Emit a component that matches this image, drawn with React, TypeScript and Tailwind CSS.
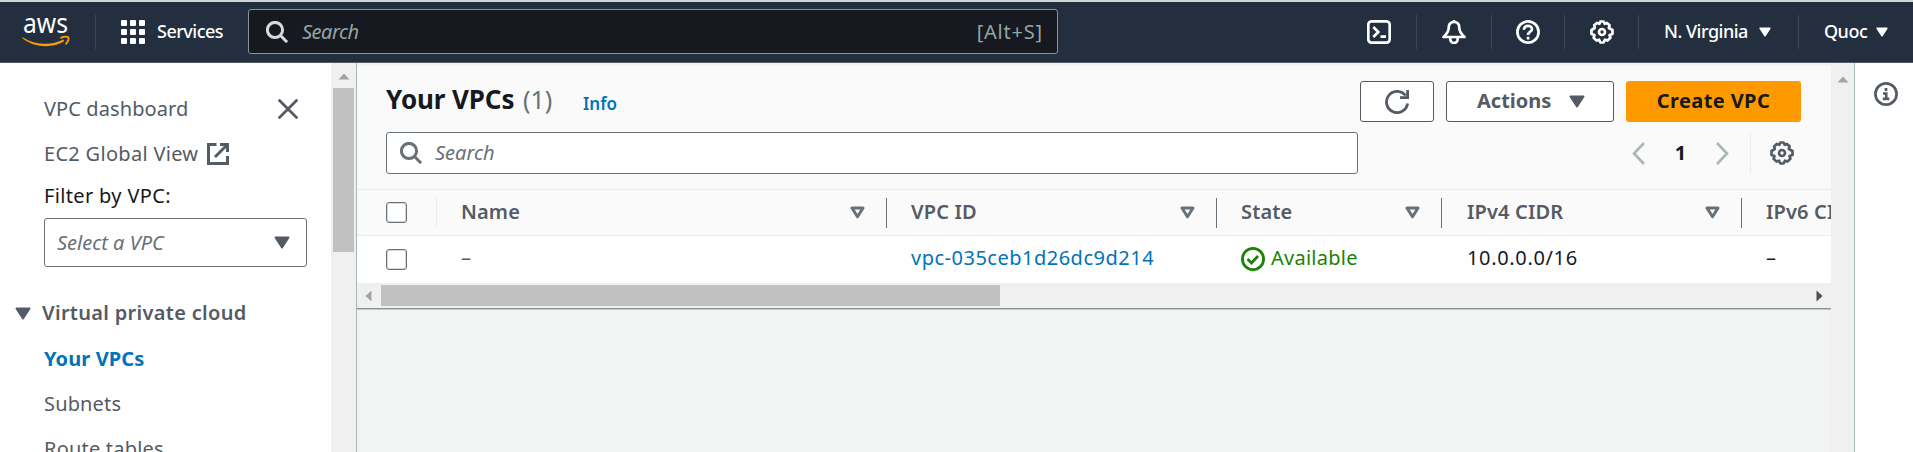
import React from "react";

const Caret = ({ className = "" }: { className?: string }) => (
  <svg viewBox="0 0 16 13" className={`shrink-0 ${className}`} fill="currentColor" stroke="currentColor" strokeWidth="2" strokeLinejoin="round">
    <path d="M1.5 1.5h13L8 11.5z" />
  </svg>
);

const SortIcon = () => (
  <svg viewBox="0 0 15 13" className="h-[13px] w-[15px] shrink-0 text-[#687078]" fill="none" stroke="currentColor" strokeWidth="3" strokeLinejoin="round">
    <path d="M2 2h11L7.5 10.8z" />
  </svg>
);

const SearchIcon = ({ className = "" }: { className?: string }) => (
  <svg viewBox="0 0 22 22" className={`size-[22px] shrink-0 ${className}`} fill="none" stroke="currentColor" strokeWidth="3">
    <circle cx="9" cy="9" r="7.6" />
    <path d="M14.5 14.5l6.6 6.6" />
  </svg>
);

const GearIcon = ({ className = "" }: { className?: string }) => (
  <svg viewBox="0 0 24 24" className={`size-6 shrink-0 ${className}`} fill="none" stroke="currentColor" strokeWidth="2.7" strokeLinejoin="round">
    <path d="M10.400 1.500h3.200l1 2.300 2.300-.9 2.700 2.400-.8 2.700 3.700 2v4l-3 1 .9 2.700-3 2.900-2.500-.9-1.300 2.800h-3.200l-1.300-2.800-2.500.9-3-2.900.9-2.700-3-1v-4l3.300-2-.6-2.700 2.900-2.400 2.300.9z" />
    <circle cx="12" cy="12" r="3" />
  </svg>
);

const ScrollArrow = ({ d, className = "" }: { d: string; className?: string }) => (
  <svg viewBox="0 0 12 12" className={`size-3 shrink-0 ${className}`} fill="currentColor">
    <path d={d} />
  </svg>
);

const NavDivider = () => <div className="h-[34px] w-px shrink-0 bg-[#414750]" />;

const AwsLogo = () => (
  <svg viewBox="0 0 48 36" className="h-9 w-12 shrink-0">
    <text x="1" y="19" fill="#fff" textLength="45" lengthAdjust="spacingAndGlyphs" className="font-['Noto_Sans'] text-[27px]">aws</text>
    <path d="M0.500 23.300c13 8.300 29 8.300 41 2.200l.8 1.800C31 34.500 12 34 0 24z" fill="#f90" />
    <path d="M38.500 24c4-1.600 7-1.600 7.800-.6s-.3 4.500-2.800 7" fill="none" stroke="#f90" strokeWidth="1.900" />
  </svg>
);

const Header = () => (
  <header className="flex h-[61px] shrink-0 items-center border-b border-[#545b64] bg-[#232f3e] pb-px text-white">
    <div className="ml-[22px] flex w-[73px] items-center pt-px"><AwsLogo /></div>
    <NavDivider />
    <svg viewBox="0 0 24 24" className="ml-[25px] size-6" fill="currentColor">
      {[0, 9, 18].map((y) => [0, 9, 18].map((x) => <rect key={`${x}-${y}`} x={x} y={y} width="6" height="6" rx="1" />))}
    </svg>
    <span className="ml-3 w-[91px] text-[18px] font-medium tracking-[-0.5px]">Services</span>
    <div className="flex h-[45px] w-[810px] items-center rounded-[3px] border border-[#879596] bg-[#16191f] pl-[17px] pr-[14px]">
      <SearchIcon className="text-[#d5dbdb]" />
      <span className="ml-[14px] text-[20px] italic tracking-[-0.5px] text-[#95a5a6]">Search</span>
      <span className="ml-auto text-[20px] tracking-[0.8px] text-[#95a5a6]">[Alt+S]</span>
    </div>
    <svg viewBox="0 0 24 24" className="ml-[309px] size-6" fill="none" stroke="currentColor" strokeWidth="2.700">
      <rect x="1.300" y="1.300" width="21.400" height="21.400" rx="3.500" />
      <path d="M6.300 7l5 5-5 5M13.500 16.700h5.500" />
    </svg>
    <div className="ml-[25px] mr-[25px]"><NavDivider /></div>
    <svg viewBox="0 0 24 24" className="size-6" fill="none" stroke="currentColor" strokeWidth="2.700" strokeLinejoin="round">
      <path d="M12 2c-4.500 0-5.300 3.500-5.300 6 0 4-3 7-5.200 9h21c-2.200-2-5.200-5-5.200-9 0-2.500-.8-6-5.300-6z" />
      <path d="M12 0v2M8.300 17.500v1.800a3.700 3.700 0 0 0 7.400 0v-1.800" />
    </svg>
    <div className="ml-[25px] mr-6"><NavDivider /></div>
    <svg viewBox="0 0 24 24" className="size-6" fill="none" stroke="currentColor" strokeWidth="2.700">
      <circle cx="12" cy="12" r="10.600" />
      <path d="M8 9.800c0-5.300 8-4.800 8-.8 0 2.800-3.900 2.600-3.900 6M12.100 16.800v2.600" />
    </svg>
    <div className="mx-6"><NavDivider /></div>
    <GearIcon className="ml-px" />
    <div className="ml-6 mr-[25px]"><NavDivider /></div>
    <span className="w-[94px] text-[18px] font-medium tracking-[-0.5px]">N. Virginia</span>
    <Caret className="ml-px h-[10px] w-3" />
    <div className="ml-[27px] mr-[25px]"><NavDivider /></div>
    <span className="w-[52px] text-[18px] font-medium tracking-[-0.5px]">Quoc</span>
    <Caret className="h-[10px] w-3" />
  </header>
);

const Sidebar = () => (
  <nav className="flex w-[357px] shrink-0 border-r border-[#aab7b8] bg-white text-[20px] leading-[28px] text-[#545b64]">
    <div className="flex h-full w-[331px] flex-col overflow-hidden whitespace-nowrap pl-[44px] pr-[24px]">
      <div className="mt-[32px] flex items-center justify-between pr-[9px]">
        <span className="tracking-[0.1px]">VPC dashboard</span>
        <svg viewBox="0 0 20 20" className="size-5" fill="none" stroke="currentColor" strokeWidth="2.800" strokeLinecap="round"><path d="M1.500 1.500l17 17M18.500 1.500l-17 17" /></svg>
      </div>
      <div className="mt-[17px] flex items-center">
        <span className="w-[163px] tracking-[0.3px]">EC2 Global View</span>
        <svg viewBox="0 0 22 22" className="size-[22px]" fill="none" stroke="currentColor" strokeWidth="3"><path d="M9.500 1.500h-8v19h19v-7.500M13 1.500h7.500V9M20 2L8 14" /></svg>
      </div>
      <div className="mt-[14px] tracking-[0.35px] text-[#16191f]">Filter by VPC:</div>
      <div className="mt-2 flex h-[49px] shrink-0 items-center justify-between rounded-[3px] border border-[#687078] pl-3 pr-4">
        <span className="italic text-[#687078]">Select a VPC</span>
        <Caret className="h-[13px] w-4" />
      </div>
      <div className="-ml-[29px] mt-8 flex items-center">
        <Caret className="h-[13px] w-4" />
        <span className="ml-[11px] font-semibold tracking-[0.3px]">Virtual private cloud</span>
      </div>
      <div className="mt-[18px] font-bold tracking-[0.1px] text-[#0073bb]">Your VPCs</div>
      <div className="mt-[17px] tracking-[0.15px]">Subnets</div>
      <div className="mt-[17px] tracking-[0.2px]">Route tables</div>
    </div>
    <div className="flex w-[25px] flex-col items-center bg-[#f0f0f0] pt-[7px]">
      <ScrollArrow d="M.5 9.500h11L6 3.500z" className="text-[#a3a3a3]" />
      <div className="mt-[6px] h-[164px] w-[21px] bg-[#c1c1c1]" />
    </div>
  </nav>
);

const Checkbox = () => <div className="size-[21px] shrink-0 rounded-[3px] border border-[#687078] bg-white shadow-[inset_0_0_0_1px_#d5dbdb]" />;

const HeadCell = ({ label, className = "" }: { label: string; className?: string }) => (
  <div className={`flex h-[30px] shrink-0 items-center justify-between border-r border-[#687078] pr-[21px] font-semibold text-[#545b64] ${className}`}>
    <span className="pb-0.5 tracking-[0.15px]">{label}</span>
    <SortIcon />
  </div>
);

const Main = () => (
  <main className="flex w-[1474px] shrink-0 flex-col overflow-hidden whitespace-nowrap bg-[#f2f3f3] pt-[3px] text-[20px]">
    <section className="h-[123px] shrink-0 bg-[#fafafa] pl-[29px] pr-[30px] pt-[15px]">
      <div className="flex h-[41px] items-center">
        <h1 className="w-[137px] pb-[5px] text-[26px] font-bold tracking-[-0.1px] text-[#16191f]">Your VPCs</h1>
        <span className="w-[60px] pb-1 text-[25px] text-[#687078]">(1)</span>
        <span className="pt-1 text-[17px] font-semibold text-[#0073bb]">Info</span>
        <div className="ml-auto flex gap-3 font-bold text-[#545b64]">
          <div className="flex h-[41px] w-[74px] items-center justify-center rounded-[3px] border border-[#545b64] bg-white">
            <svg viewBox="0 0 24 24" className="size-6" fill="none" stroke="currentColor" strokeWidth="2.800"><path d="M22.600 13.500A10.600 10.600 0 1 1 20.500 5.500M22.600 0v7.600H15" /></svg>
          </div>
          <div className="flex h-[41px] w-[168px] items-center rounded-[3px] border border-[#545b64] bg-white pl-[30px]">
            <span className="w-[92px] pb-0.5">Actions</span><Caret className="h-[13px] w-4" />
          </div>
          <div className="flex h-[41px] w-[175px] items-center justify-center rounded-[3px] bg-[#f90] pb-0.5 tracking-[0.4px] text-[#16191f]">Create VPC</div>
        </div>
      </div>
      <div className="mt-[10px] flex h-[42px] items-center text-[#545b64]">
        <div className="flex h-[42px] w-[972px] items-center rounded-[3px] border border-[#687078] bg-white pl-[13px] text-[#687078]">
          <SearchIcon /><span className="ml-[13px] italic">Search</span>
        </div>
        <svg viewBox="0 0 13 23" className="ml-[274px] h-[23px] w-[13px] text-[#aab7b8]" fill="none" stroke="currentColor" strokeWidth="2.600"><path d="M12 1L2 11.500 12 22" /></svg>
        <span className="w-[71px] text-center font-bold text-[#16191f]">1</span>
        <svg viewBox="0 0 13 23" className="h-[23px] w-[13px] text-[#aab7b8]" fill="none" stroke="currentColor" strokeWidth="2.600"><path d="M1 1l10 10.500L1 22" /></svg>
        <div className="ml-[21px] mr-[19px] h-[41px] w-px bg-[#eaeded]" />
        <GearIcon />
      </div>
    </section>
    <div className="flex h-[47px] w-[1600px] shrink-0 items-center border-y border-[#eaeded] bg-[#fafafa] pl-[29px]">
      <Checkbox />
      <div className="ml-[29px] h-[30px] w-px bg-[#eaeded]" />
      <HeadCell label="Name" className="ml-6 w-[426px]" />
      <HeadCell label="VPC ID" className="ml-6 w-[306px]" />
      <HeadCell label="State" className="ml-6 w-[201px]" />
      <HeadCell label="IPv4 CIDR" className="ml-[25px] w-[275px]" />
      <span className="ml-6 pb-0.5 font-semibold tracking-[0.15px] text-[#545b64]">IPv6 CIDR</span>
    </div>
    <div className="flex h-[47px] w-[1600px] shrink-0 items-center bg-white pb-px pl-[29px] text-[#16191f]">
      <Checkbox />
      <span className="ml-[54px] w-[450px] pb-0.5 text-[#545b64]">–</span>
      <span className="w-[330px] pb-[3px] tracking-[0.5px] text-[#0073bb]">vpc-035ceb1d26dc9d214</span>
      <div className="flex w-[226px] items-center gap-[6px] text-[#1d8102]">
        <svg viewBox="0 0 24 24" className="size-6" fill="none" stroke="currentColor" strokeWidth="2.800"><circle cx="12" cy="12" r="10.600" /><path d="M6.500 12l4 4 6.500-7" /></svg>
        <span className="pb-[3px] tracking-[0.25px]">Available</span>
      </div>
      <span className="w-[299px] pb-[3px] tracking-[0.65px]">10.0.0.0/16</span>
      <span className="pb-0.5">–</span>
    </div>
    <div className="flex h-[25px] shrink-0 items-center bg-[#f0f0f0] pl-[5px] pr-[6px]">
      <ScrollArrow d="M9.500.5v11L3.500 6z" className="text-[#a3a3a3]" />
      <div className="ml-[7px] h-[21px] w-[619px] bg-[#c1c1c1]" />
      <ScrollArrow d="M3.500.5v11l6-5.500z" className="ml-auto text-[#505050]" />
    </div>
    <div className="h-[2px] shrink-0 border-b border-[#c3caca] bg-[#879596]" />
  </main>
);

export default function App() {
  return (
    <div className="flex h-[452px] w-[1913px] flex-col overflow-hidden border-t-2 border-[#d0d3d6] bg-[#f2f3f3] font-['Noto_Sans',sans-serif]">
      <Header />
      <div className="flex min-h-0 flex-1">
        <Sidebar />
        <Main />
        <div className="flex w-6 shrink-0 flex-col items-center border-r border-[#aab7b8] bg-[#f0f0f0] pt-[10px]">
          <ScrollArrow d="M.5 9.500h11L6 3.500z" className="text-[#a3a3a3]" />
        </div>
        <aside className="flex flex-1 justify-center bg-white pl-1 pt-[19px] text-[#545b64]">
          <svg viewBox="0 0 24 24" className="size-6" fill="none" stroke="currentColor" strokeWidth="2.700">
            <circle cx="12" cy="12" r="10.600" />
            <path d="M12 6v3M9 11.500h3.200v5M8.800 16.800h6.500" />
          </svg>
        </aside>
      </div>
    </div>
  );
}
